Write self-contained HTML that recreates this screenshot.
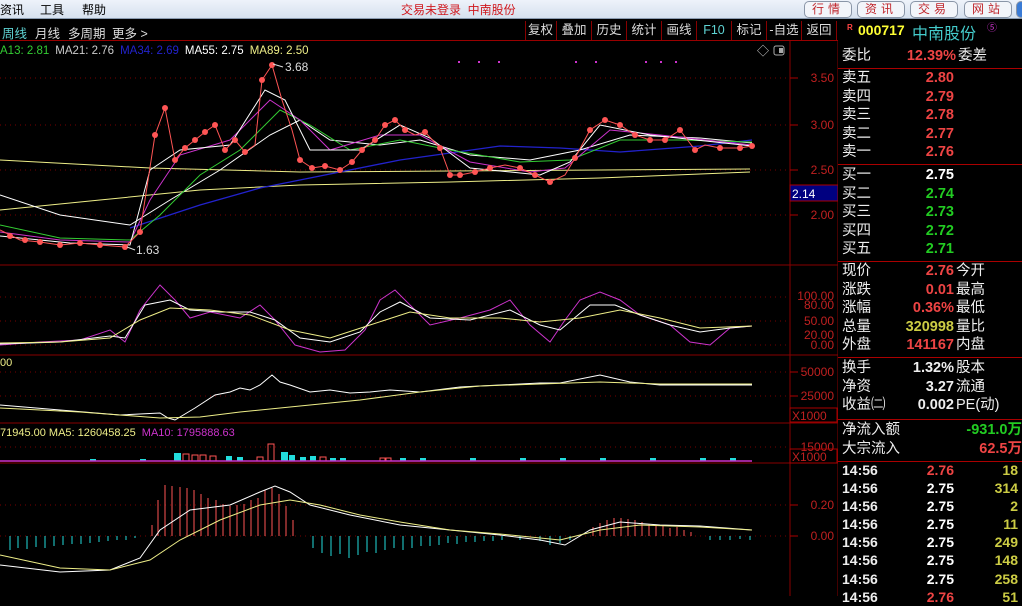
<!DOCTYPE html><html><head><meta charset="utf-8"><style>
*{margin:0;padding:0;box-sizing:border-box}
body{width:1022px;height:596px;overflow:hidden;background:#000;font-family:"Liberation Sans","Noto Sans CJK SC",sans-serif;font-size:12px;position:relative}
.a{position:absolute;white-space:nowrap}
#top{position:absolute;left:0;top:0;width:1022px;height:19px;background:linear-gradient(#eef3fa,#d6e1ee);border-bottom:1px solid #8a9bb0}
.tb{position:absolute;top:1px;height:17px;border:1px solid #8a96a8;border-radius:5px;background:#f2f5fa;color:#c0272d;font-size:12px;line-height:15px;text-align:center;letter-spacing:4px}
.btn{position:absolute;top:21px;height:19px;color:#ddd;font-size:12.5px;line-height:19px;text-align:center;border-right:1px solid #800}
.rp{position:absolute;left:838px;width:184px;font-size:14.5px;line-height:18.5px}
.rp div{height:18.5px;position:relative}
.l{position:absolute;left:4px;color:#eee}
.v{position:absolute;right:68px;font-weight:bold}
.u{position:absolute;left:118px;color:#eee}
.hr{position:absolute;left:838px;width:184px;height:1px;background:#a00}
.tk div{height:18.1px}
</style></head><body>
<div id="top">
<span class="a" style="left:0;top:1px;color:#000">资讯</span>
<span class="a" style="left:40px;top:1px;color:#000">工具</span>
<span class="a" style="left:82px;top:1px;color:#000">帮助</span>
<span class="a" style="left:401px;top:1px;color:#d0181e">交易未登录&nbsp;&nbsp;中南股份</span>
<div class="tb" style="left:804px;width:48px">行情</div>
<div class="tb" style="left:857px;width:48px">资讯</div>
<div class="tb" style="left:910px;width:48px">交易</div>
<div class="tb" style="left:964px;width:48px">网站</div>
<div class="tb" style="left:1016px;width:10px;background:#3a7bd5"></div>
</div>
<div class="a" style="left:0;top:20px;width:838px;height:21px;border-bottom:1px solid #900"></div>
<span class="a" style="left:2px;top:23px;color:#5fd4d4;font-size:12.5px">周线</span>
<span class="a" style="left:35px;top:23px;color:#ddd;font-size:12.5px">月线</span>
<span class="a" style="left:68px;top:23px;color:#ddd;font-size:12.5px">多周期</span>
<span class="a" style="left:112px;top:23px;color:#ddd;font-size:12.5px">更多 &gt;</span>
<div class="a" style="left:525px;top:21px;height:19px;border-left:1px solid #800"></div>
<div class="btn" style="left:525px;width:32px">复权</div>
<div class="btn" style="left:557px;width:35px">叠加</div>
<div class="btn" style="left:592px;width:35px">历史</div>
<div class="btn" style="left:627px;width:35px">统计</div>
<div class="btn" style="left:662px;width:35px">画线</div>
<div class="btn" style="left:697px;width:35px;color:#5fd4d4">F10</div>
<div class="btn" style="left:732px;width:35px">标记</div>
<div class="btn" style="left:767px;width:35px">-自选</div>
<div class="btn" style="left:802px;width:35px">返回</div>
<span class="a" style="left:847px;top:23px;color:#f44;font-size:8px;font-weight:bold">R</span>
<span class="a" style="left:858px;top:22px;color:#ff3;font-size:14px;font-weight:bold">000717</span>
<span class="a" style="left:912px;top:20px;color:#4cc;font-size:16px">中南股份</span>
<span class="a" style="left:987px;top:19px;color:#c3c;font-size:10px">⑤</span>

<svg class="a" style="left:0;top:41px" width="838" height="555" viewBox="0 41 838 555">
<g stroke="#800" fill="none">
<line x1="0" y1="265" x2="838" y2="265"/><line x1="0" y1="355" x2="838" y2="355"/><line x1="0" y1="423" x2="838" y2="423"/><line x1="0" y1="463" x2="838" y2="463"/>
<line x1="790" y1="41" x2="790" y2="596"/><line x1="838" y1="20" x2="838" y2="596"/>
</g>
<g stroke="#700" stroke-dasharray="1 4">
<line x1="0" y1="78" x2="790" y2="78"/><line x1="0" y1="125" x2="790" y2="125"/><line x1="0" y1="170" x2="790" y2="170"/><line x1="0" y1="215" x2="790" y2="215"/>
<line x1="0" y1="297" x2="790" y2="297"/><line x1="0" y1="321" x2="790" y2="321"/><line x1="0" y1="345" x2="790" y2="345"/>
<line x1="0" y1="372" x2="790" y2="372"/><line x1="0" y1="396" x2="790" y2="396"/><line x1="0" y1="447" x2="790" y2="447"/>
<line x1="0" y1="505" x2="790" y2="505"/><line x1="0" y1="536" x2="790" y2="536"/>
</g>
<g stroke="#a00"><line x1="790" y1="78" x2="798" y2="78"/><line x1="790" y1="125" x2="798" y2="125"/><line x1="790" y1="170" x2="798" y2="170"/><line x1="790" y1="215" x2="798" y2="215"/><line x1="790" y1="505" x2="798" y2="505"/><line x1="790" y1="536" x2="798" y2="536"/><line x1="790" y1="372" x2="798" y2="372"/><line x1="790" y1="396" x2="798" y2="396"/></g>
<g fill="#c02020" font-size="12" font-family="Liberation Sans" text-anchor="end">
<text x="834" y="82">3.50</text><text x="834" y="129">3.00</text><text x="834" y="174">2.50</text><text x="834" y="219">2.00</text>
<text x="834" y="300">100.00</text><text x="834" y="309">80.00</text><text x="834" y="325">50.00</text><text x="834" y="339">20.00</text><text x="834" y="349">0.00</text>
<text x="834" y="376">50000</text><text x="834" y="400">25000</text>
<text x="834" y="451">15000</text>
<text x="834" y="509">0.20</text><text x="834" y="540">0.00</text>
</g>
<rect x="790" y="185" width="48" height="16" fill="#000080" stroke="#a00"/>
<text x="792" y="198" fill="#fff" font-size="12" font-family="Liberation Sans">2.14</text>
<rect x="790" y="408" width="47" height="14" fill="none" stroke="#a00"/><text x="792" y="420" fill="#c02020" font-size="12" font-family="Liberation Sans">X1000</text>
<rect x="790" y="449" width="47" height="14" fill="none" stroke="#a00"/><text x="792" y="461" fill="#c02020" font-size="12" font-family="Liberation Sans">X1000</text>
<text x="0" y="54" font-size="11.5" font-family="Liberation Sans"><tspan fill="#3c3">A13: 2.81</tspan><tspan fill="#ccc" dx="6">MA21: 2.76</tspan><tspan fill="#22c" dx="6">MA34: 2.69</tspan><tspan fill="#fff" dx="6">MA55: 2.75</tspan><tspan fill="#ee8" dx="6">MA89: 2.50</tspan></text>
<text x="757" y="55" fill="#ccc" font-size="12">◇</text><rect x="774" y="46" width="10" height="9" rx="2" fill="none" stroke="#aaa"/><rect x="779" y="48" width="4" height="5" fill="#aaa"/>
<g fill="#c3c"><rect x="458" y="61" width="2" height="2"/><rect x="478" y="61" width="2" height="2"/><rect x="498" y="61" width="2" height="2"/><rect x="575" y="61" width="2" height="2"/><rect x="595" y="61" width="2" height="2"/><rect x="645" y="61" width="2" height="2"/><rect x="660" y="61" width="2" height="2"/><rect x="675" y="61" width="2" height="2"/></g>
<g fill="none" stroke-width="1">
<polyline stroke="#ee8" points="0,160 150,168 300,172 450,171 600,170 750,169"/>
<polyline stroke="#ee8" points="0,210 100,200 200,190 300,185 450,182 600,178 750,172"/>
<polyline stroke="#22c" stroke-width="1.3" points="130,228 200,205 260,188 320,176 400,160 500,146 560,148 620,152 700,146 752,140"/>
<polyline stroke="#fff" points="0,195 60,215 130,225 170,200 220,170 270,135 300,120 330,140 380,145 420,140 470,155 530,160 580,150 630,135 700,138 752,143"/>
<polyline stroke="#3c3" points="0,225 60,238 130,240 160,215 200,175 240,150 280,110 310,125 350,150 400,140 450,150 520,162 570,160 620,140 680,140 752,142"/>
<polyline stroke="#c3c" points="0,232 60,240 130,242 150,200 180,155 230,140 270,100 300,120 330,150 380,135 420,135 470,162 530,172 565,168 610,130 660,135 752,145"/>
<polyline stroke="#fff" points="0,236 70,243 130,245 150,170 180,150 230,145 265,90 285,100 310,150 360,150 400,125 430,138 470,168 540,175 570,162 600,125 650,135 752,146"/>
<polyline stroke="#f55" points="0,230 20,240 40,242 60,245 80,243 100,245 125,247 140,232 155,135 165,108 175,160 185,148 195,140 205,132 215,125 225,150 235,140 245,152 255,145 262,80 272,65 282,100 292,130 300,160 312,168 325,166 340,170 352,162 362,150 375,140 385,125 395,120 405,130 415,135 425,132 440,148 450,175 460,175 475,172 490,168 505,165 520,168 535,175 550,182 565,175 575,158 590,130 605,120 620,125 635,135 650,140 665,140 680,130 695,150 705,145 720,148 740,148 752,146"/>
</g>
<g fill="#f55">
<circle cx="10" cy="236" r="3"/><circle cx="25" cy="240" r="3"/><circle cx="40" cy="242" r="3"/><circle cx="60" cy="245" r="3"/><circle cx="80" cy="243" r="3"/><circle cx="100" cy="245" r="3"/><circle cx="125" cy="247" r="3"/><circle cx="140" cy="232" r="3"/><circle cx="155" cy="135" r="3"/><circle cx="165" cy="108" r="3"/><circle cx="175" cy="160" r="3"/><circle cx="185" cy="148" r="3"/><circle cx="195" cy="140" r="3"/><circle cx="205" cy="132" r="3"/><circle cx="215" cy="125" r="3"/><circle cx="225" cy="150" r="3"/><circle cx="235" cy="140" r="3"/><circle cx="245" cy="152" r="3"/><circle cx="262" cy="80" r="3"/><circle cx="272" cy="65" r="3"/><circle cx="300" cy="160" r="3"/><circle cx="312" cy="168" r="3"/><circle cx="325" cy="166" r="3"/><circle cx="340" cy="170" r="3"/><circle cx="352" cy="162" r="3"/><circle cx="362" cy="150" r="3"/><circle cx="375" cy="140" r="3"/><circle cx="385" cy="125" r="3"/><circle cx="395" cy="120" r="3"/><circle cx="405" cy="130" r="3"/><circle cx="425" cy="132" r="3"/><circle cx="440" cy="148" r="3"/><circle cx="450" cy="175" r="3"/><circle cx="460" cy="175" r="3"/><circle cx="475" cy="172" r="3"/><circle cx="490" cy="168" r="3"/><circle cx="520" cy="168" r="3"/><circle cx="535" cy="175" r="3"/><circle cx="550" cy="182" r="3"/><circle cx="575" cy="158" r="3"/><circle cx="590" cy="130" r="3"/><circle cx="605" cy="120" r="3"/><circle cx="620" cy="125" r="3"/><circle cx="635" cy="135" r="3"/><circle cx="650" cy="140" r="3"/><circle cx="665" cy="140" r="3"/><circle cx="680" cy="130" r="3"/><circle cx="695" cy="150" r="3"/><circle cx="720" cy="148" r="3"/><circle cx="740" cy="148" r="3"/><circle cx="752" cy="146" r="3"/>
</g>
<text x="285" y="71" fill="#ddd" font-size="12" font-family="Liberation Sans">3.68</text><line x1="273" y1="64" x2="283" y2="67" stroke="#ddd"/>
<text x="136" y="254" fill="#ddd" font-size="12" font-family="Liberation Sans">1.63</text><line x1="127" y1="247" x2="135" y2="250" stroke="#ddd"/>
<g fill="none">
<polyline stroke="#c3c" points="0,345 40,342 80,340 110,330 125,342 140,310 160,285 175,300 190,318 210,312 240,318 260,305 275,320 295,345 320,352 345,350 365,330 380,300 395,290 410,305 430,325 460,318 490,310 510,300 530,325 550,342 565,320 580,300 600,292 620,300 640,315 670,325 690,342 710,345 730,328 752,326"/>
<polyline stroke="#fff" points="0,344 60,342 110,336 125,338 145,305 170,300 190,310 220,312 250,312 275,320 300,338 330,342 360,332 380,312 400,302 430,318 470,320 510,310 540,325 560,330 590,305 615,305 640,315 670,325 700,332 730,328 752,326"/>
<polyline stroke="#ee8" points="0,343 60,342 110,338 140,320 170,308 210,310 250,315 290,330 330,338 370,325 410,312 450,318 500,318 540,322 580,318 620,310 660,318 700,328 752,326"/>
</g>
<text x="0" y="366" fill="#ee8" font-size="11" font-family="Liberation Sans">00</text>
<polyline fill="none" stroke="#fff" points="0,405 60,410 120,415 160,413 168,418 175,420 195,408 215,395 230,392 240,388 250,390 260,385 272,375 280,382 290,385 310,392 330,390 350,393 370,392 390,390 420,392 460,387 500,385 540,383 560,383 600,375 630,382 660,385 700,385 752,385"/>
<polyline fill="none" stroke="#ee8" points="0,408 80,412 160,418 200,417 240,412 300,406 360,400 420,392 480,386 540,384 600,382 660,384 752,384"/>
<text x="0" y="436" font-size="11" font-family="Liberation Sans"><tspan fill="#ee8">71945.00 MA5: 1260458.25</tspan><tspan fill="#c3c" dx="6">MA10: 1795888.63</tspan></text>
<g stroke="#f55" fill="none">
<rect x="183" y="454" width="6" height="7"/><rect x="192" y="455" width="6" height="6"/><rect x="200" y="455" width="6" height="6"/><rect x="210" y="456" width="6" height="5"/><rect x="268" y="444" width="6" height="17"/><rect x="257" y="457" width="6" height="4"/><rect x="320" y="457" width="6" height="4"/><rect x="380" y="458" width="6" height="3"/><rect x="385" y="458" width="6" height="3"/>
</g>
<g fill="#2dd"><rect x="174" y="453" width="7" height="8"/><rect x="226" y="456" width="6" height="5"/><rect x="237" y="457" width="6" height="4"/><rect x="281" y="452" width="7" height="9"/><rect x="289" y="455" width="6" height="6"/><rect x="300" y="457" width="6" height="4"/><rect x="310" y="456" width="6" height="5"/><rect x="330" y="458" width="6" height="3"/><rect x="340" y="458" width="6" height="3"/><rect x="400" y="458" width="6" height="3"/><rect x="420" y="458" width="6" height="3"/><rect x="470" y="458" width="6" height="3"/><rect x="520" y="458" width="6" height="3"/><rect x="560" y="458" width="6" height="3"/><rect x="600" y="458" width="6" height="3"/><rect x="650" y="458" width="6" height="3"/><rect x="700" y="458" width="6" height="3"/><rect x="730" y="458" width="6" height="3"/><rect x="90" y="459" width="6" height="2"/><rect x="140" y="459" width="6" height="2"/></g>
<line x1="0" y1="461" x2="752" y2="461" stroke="#c3c" stroke-width="1.5"/>
<g stroke="#f55"><line x1="152" y1="536" x2="152" y2="525"/><line x1="158" y1="536" x2="158" y2="500"/><line x1="165" y1="536" x2="165" y2="485"/><line x1="172" y1="536" x2="172" y2="486"/><line x1="180" y1="536" x2="180" y2="487"/><line x1="187" y1="536" x2="187" y2="488"/><line x1="194" y1="536" x2="194" y2="490"/><line x1="201" y1="536" x2="201" y2="494"/><line x1="208" y1="536" x2="208" y2="498"/><line x1="216" y1="536" x2="216" y2="500"/><line x1="223" y1="536" x2="223" y2="504"/><line x1="230" y1="536" x2="230" y2="506"/><line x1="237" y1="536" x2="237" y2="505"/><line x1="244" y1="536" x2="244" y2="504"/><line x1="251" y1="536" x2="251" y2="500"/><line x1="258" y1="536" x2="258" y2="498"/><line x1="265" y1="536" x2="265" y2="490"/><line x1="272" y1="536" x2="272" y2="488"/><line x1="279" y1="536" x2="279" y2="494"/><line x1="286" y1="536" x2="286" y2="506"/><line x1="293" y1="536" x2="293" y2="520"/>
<line x1="593" y1="536" x2="593" y2="527"/><line x1="600" y1="536" x2="600" y2="523"/><line x1="607" y1="536" x2="607" y2="520"/><line x1="614" y1="536" x2="614" y2="518"/><line x1="621" y1="536" x2="621" y2="518"/><line x1="628" y1="536" x2="628" y2="519"/><line x1="635" y1="536" x2="635" y2="520"/><line x1="642" y1="536" x2="642" y2="522"/><line x1="649" y1="536" x2="649" y2="524"/><line x1="656" y1="536" x2="656" y2="525"/><line x1="663" y1="536" x2="663" y2="526"/><line x1="670" y1="536" x2="670" y2="528"/><line x1="677" y1="536" x2="677" y2="527"/><line x1="684" y1="536" x2="684" y2="530"/><line x1="691" y1="536" x2="691" y2="532"/></g>
<g stroke="#2dd"><line x1="10" y1="536" x2="10" y2="550"/><line x1="18" y1="536" x2="18" y2="548"/><line x1="27" y1="536" x2="27" y2="549"/><line x1="36" y1="536" x2="36" y2="547"/><line x1="45" y1="536" x2="45" y2="548"/><line x1="54" y1="536" x2="54" y2="546"/><line x1="63" y1="536" x2="63" y2="545"/><line x1="72" y1="536" x2="72" y2="544"/><line x1="81" y1="536" x2="81" y2="544"/><line x1="90" y1="536" x2="90" y2="543"/><line x1="99" y1="536" x2="99" y2="542"/><line x1="108" y1="536" x2="108" y2="541"/><line x1="117" y1="536" x2="117" y2="540"/><line x1="126" y1="536" x2="126" y2="540"/><line x1="135" y1="536" x2="135" y2="538"/>
<line x1="313" y1="536" x2="313" y2="548"/><line x1="322" y1="536" x2="322" y2="553"/><line x1="331" y1="536" x2="331" y2="556"/><line x1="340" y1="536" x2="340" y2="554"/><line x1="349" y1="536" x2="349" y2="558"/><line x1="358" y1="536" x2="358" y2="555"/><line x1="367" y1="536" x2="367" y2="552"/><line x1="376" y1="536" x2="376" y2="553"/><line x1="385" y1="536" x2="385" y2="550"/><line x1="394" y1="536" x2="394" y2="548"/><line x1="403" y1="536" x2="403" y2="550"/><line x1="412" y1="536" x2="412" y2="548"/><line x1="421" y1="536" x2="421" y2="546"/><line x1="430" y1="536" x2="430" y2="546"/><line x1="439" y1="536" x2="439" y2="545"/><line x1="448" y1="536" x2="448" y2="543"/><line x1="457" y1="536" x2="457" y2="544"/><line x1="466" y1="536" x2="466" y2="542"/><line x1="475" y1="536" x2="475" y2="542"/><line x1="484" y1="536" x2="484" y2="541"/><line x1="493" y1="536" x2="493" y2="541"/><line x1="502" y1="536" x2="502" y2="540"/><line x1="520" y1="536" x2="520" y2="540"/><line x1="540" y1="536" x2="540" y2="541"/><line x1="550" y1="536" x2="550" y2="545"/><line x1="560" y1="536" x2="560" y2="543"/><line x1="570" y1="536" x2="570" y2="540"/>
<line x1="710" y1="536" x2="710" y2="540"/><line x1="720" y1="536" x2="720" y2="540"/><line x1="730" y1="536" x2="730" y2="540"/><line x1="740" y1="536" x2="740" y2="539"/><line x1="750" y1="536" x2="750" y2="540"/></g>
<polyline fill="none" stroke="#fff" points="0,565 60,572 110,570 140,558 160,530 190,510 230,505 260,492 275,486 290,492 310,505 350,515 400,525 450,530 500,535 540,540 565,545 590,530 620,522 660,525 700,526 752,530"/>
<polyline fill="none" stroke="#ee8" points="0,555 60,568 110,570 150,560 180,540 220,520 260,505 290,500 320,505 360,515 400,522 450,530 500,534 560,540 600,530 640,525 700,527 752,530"/>
</svg>

<div class="hr" style="top:68px"></div><div class="hr" style="top:164px"></div><div class="hr" style="top:261px"></div><div class="hr" style="top:357px"></div><div class="hr" style="top:419px"></div><div class="hr" style="top:461px"></div>
<div class="rp" style="top:47px"><div><span class="l">委比</span><span class="v" style="color:#e44;right:66px">12.39%</span><span class="u" style="left:120px">委差</span></div></div>
<div class="rp" style="top:69px">
<div><span class="l">卖五</span><span class="v" style="color:#e44">2.80</span></div>
<div><span class="l">卖四</span><span class="v" style="color:#e44">2.79</span></div>
<div><span class="l">卖三</span><span class="v" style="color:#e44">2.78</span></div>
<div><span class="l">卖二</span><span class="v" style="color:#e44">2.77</span></div>
<div><span class="l">卖一</span><span class="v" style="color:#e44">2.76</span></div></div>
<div class="rp" style="top:166px">
<div><span class="l">买一</span><span class="v" style="color:#fff">2.75</span></div>
<div><span class="l">买二</span><span class="v" style="color:#2c2">2.74</span></div>
<div><span class="l">买三</span><span class="v" style="color:#2c2">2.73</span></div>
<div><span class="l">买四</span><span class="v" style="color:#2c2">2.72</span></div>
<div><span class="l">买五</span><span class="v" style="color:#2c2">2.71</span></div></div>
<div class="rp" style="top:262px">
<div><span class="l">现价</span><span class="v" style="color:#e44">2.76</span><span class="u">今开</span></div>
<div><span class="l">涨跌</span><span class="v" style="color:#e44">0.01</span><span class="u">最高</span></div>
<div><span class="l">涨幅</span><span class="v" style="color:#e44">0.36%</span><span class="u">最低</span></div>
<div><span class="l">总量</span><span class="v" style="color:#cc4">320998</span><span class="u">量比</span></div>
<div><span class="l">外盘</span><span class="v" style="color:#e44">141167</span><span class="u">内盘</span></div></div>
<div class="rp" style="top:359px">
<div><span class="l">换手</span><span class="v" style="color:#eee">1.32%</span><span class="u">股本</span></div>
<div><span class="l">净资</span><span class="v" style="color:#eee">3.27</span><span class="u">流通</span></div>
<div><span class="l">收益㈡</span><span class="v" style="color:#eee">0.002</span><span class="u">PE(动)</span></div></div>
<div class="rp" style="top:421px">
<div><span class="l">净流入额</span><span class="v" style="color:#2c2;right:0">-931.0万</span></div>
<div><span class="l">大宗流入</span><span class="v" style="color:#e44;right:0">62.5万</span></div></div>
<div class="rp tk" style="top:461px;font-size:14px;line-height:18px">
<div><span class="l" style="font-weight:bold">14:56</span><span class="v" style="color:#e44">2.76</span><span class="v" style="color:#cc4;right:4px">18</span></div>
<div><span class="l" style="font-weight:bold">14:56</span><span class="v" style="color:#fff">2.75</span><span class="v" style="color:#cc4;right:4px">314</span></div>
<div><span class="l" style="font-weight:bold">14:56</span><span class="v" style="color:#fff">2.75</span><span class="v" style="color:#cc4;right:4px">2</span></div>
<div><span class="l" style="font-weight:bold">14:56</span><span class="v" style="color:#fff">2.75</span><span class="v" style="color:#cc4;right:4px">11</span></div>
<div><span class="l" style="font-weight:bold">14:56</span><span class="v" style="color:#fff">2.75</span><span class="v" style="color:#cc4;right:4px">249</span></div>
<div><span class="l" style="font-weight:bold">14:56</span><span class="v" style="color:#fff">2.75</span><span class="v" style="color:#cc4;right:4px">148</span></div>
<div><span class="l" style="font-weight:bold">14:56</span><span class="v" style="color:#fff">2.75</span><span class="v" style="color:#cc4;right:4px">258</span></div>
<div><span class="l" style="font-weight:bold">14:56</span><span class="v" style="color:#e44">2.76</span><span class="v" style="color:#cc4;right:4px">51</span></div></div>
</body></html>
